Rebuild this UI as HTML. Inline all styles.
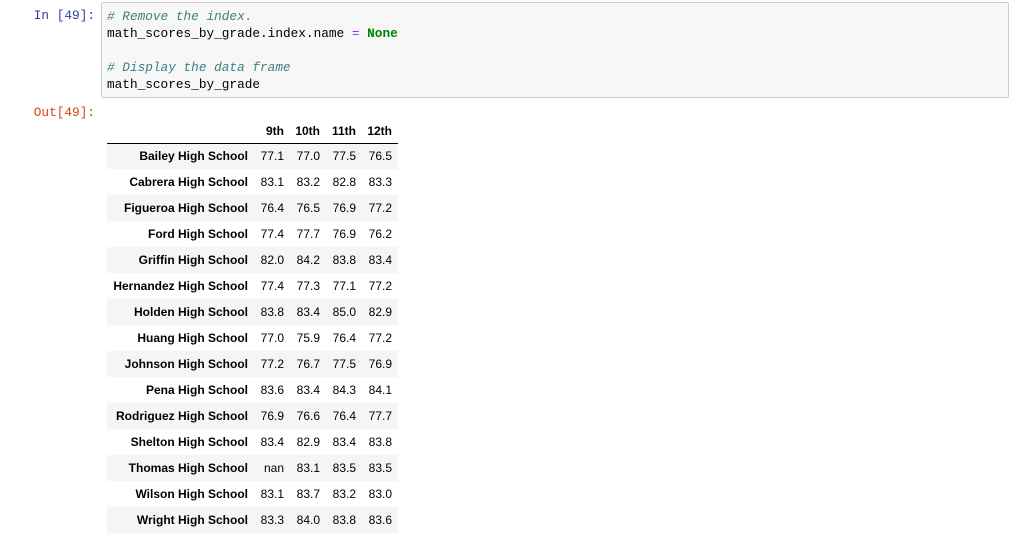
<!DOCTYPE html>
<html><head><style>
body{margin:0;background:#fff;width:1010px;height:538px;overflow:hidden;position:relative;font-family:"Liberation Sans",Arial,sans-serif}
.prompt{position:absolute;font-family:"Liberation Mono",monospace;font-size:12.75px;text-align:right;width:95px;left:0}
.code{position:absolute;left:101px;top:2px;width:908px;height:96px;background:#f7f7f7;border:1px solid #cfcfcf;border-radius:2px;box-sizing:border-box}
.code pre{margin:0;position:absolute;left:5px;top:5px;font-family:"Liberation Mono",monospace;font-size:12.75px;line-height:17px;color:#000}
.c{color:#408080;font-style:italic}.o{color:#aa22ff}.k{color:#008000;font-weight:bold}
table{position:absolute;left:107px;top:119px;border-collapse:collapse;font-size:12px;color:#000;table-layout:fixed}
td,th{height:26px;padding:0 6px 0 0;text-align:right;box-sizing:border-box}
thead th{height:24px;border-bottom:1px solid #000;vertical-align:middle}
tbody th{font-weight:bold}
tbody tr:nth-child(odd){background:#f5f5f5}
</style></head><body>
<div class="prompt" style="top:8px;color:#303f9f">In&nbsp;[49]:</div>
<div class="code"><pre><span class="c"># Remove the index.</span>
math_scores_by_grade.index.name <span class="o">=</span> <span class="k">None</span>

<span class="c"># Display the data frame</span>
math_scores_by_grade</pre></div>
<div class="prompt" style="top:105px;color:#d84315">Out[49]:</div>
<table>
<colgroup><col style="width:147px"><col style="width:36px"><col style="width:36px"><col style="width:36px"><col style="width:36px"></colgroup>
<thead><tr><th></th><th>9th</th><th>10th</th><th>11th</th><th>12th</th></tr></thead>
<tbody>
<tr><th>Bailey High School</th><td>77.1</td><td>77.0</td><td>77.5</td><td>76.5</td></tr>
<tr><th>Cabrera High School</th><td>83.1</td><td>83.2</td><td>82.8</td><td>83.3</td></tr>
<tr><th>Figueroa High School</th><td>76.4</td><td>76.5</td><td>76.9</td><td>77.2</td></tr>
<tr><th>Ford High School</th><td>77.4</td><td>77.7</td><td>76.9</td><td>76.2</td></tr>
<tr><th>Griffin High School</th><td>82.0</td><td>84.2</td><td>83.8</td><td>83.4</td></tr>
<tr><th>Hernandez High School</th><td>77.4</td><td>77.3</td><td>77.1</td><td>77.2</td></tr>
<tr><th>Holden High School</th><td>83.8</td><td>83.4</td><td>85.0</td><td>82.9</td></tr>
<tr><th>Huang High School</th><td>77.0</td><td>75.9</td><td>76.4</td><td>77.2</td></tr>
<tr><th>Johnson High School</th><td>77.2</td><td>76.7</td><td>77.5</td><td>76.9</td></tr>
<tr><th>Pena High School</th><td>83.6</td><td>83.4</td><td>84.3</td><td>84.1</td></tr>
<tr><th>Rodriguez High School</th><td>76.9</td><td>76.6</td><td>76.4</td><td>77.7</td></tr>
<tr><th>Shelton High School</th><td>83.4</td><td>82.9</td><td>83.4</td><td>83.8</td></tr>
<tr><th>Thomas High School</th><td>nan</td><td>83.1</td><td>83.5</td><td>83.5</td></tr>
<tr><th>Wilson High School</th><td>83.1</td><td>83.7</td><td>83.2</td><td>83.0</td></tr>
<tr><th>Wright High School</th><td>83.3</td><td>84.0</td><td>83.8</td><td>83.6</td></tr>
</tbody></table>
</body></html>
